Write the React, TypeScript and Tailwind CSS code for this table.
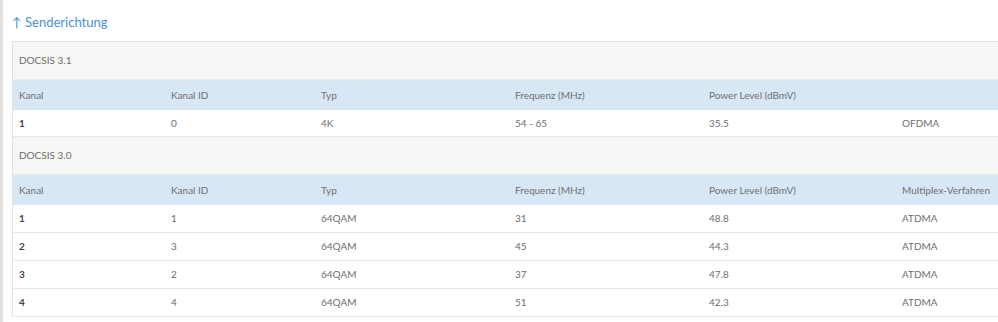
import React from "react";

const cols = "grid grid-cols-[152px_150px_194px_194px_193px_1fr]";

function Header({ last }: { last: string }) {
  const h = ["Kanal", "Kanal ID", "Typ", "Frequenz (MHz)", "Power Level (dBmV)", last];
  return (
    <div className={`${cols} h-[30px] items-center bg-[#d7e7f5] text-[#707070]`}>
      {h.map((t, i) => (
        <div key={i} className="pl-[6px]">{t}</div>
      ))}
    </div>
  );
}

function Row({ r, h = "h-[28px]" }: { r: string[]; h?: string }) {
  return (
    <div className={`${cols} ${h} items-center bg-white border-b border-[#e6e6e6] text-[#6e6e6e]`}>
      {r.map((t, i) => (
        <div key={i} className={`pl-[6px] ${i === 0 ? "font-bold text-[#444]" : ""}`}>{t}</div>
      ))}
    </div>
  );
}

function Section({ title }: { title: string }) {
  return (
    <div className="h-[38px] flex items-center pl-[6px] bg-[#f6f6f4] border-b border-[#ebebeb] text-[#6e6e6e]">{title}</div>
  );
}

export default function App() {
  const rows30 = [
    ["1", "1", "64QAM", "31", "48.8", "ATDMA"],
    ["2", "3", "64QAM", "45", "44.3", "ATDMA"],
    ["3", "2", "64QAM", "37", "47.8", "ATDMA"],
    ["4", "4", "64QAM", "51", "42.3", "ATDMA"],
  ];
  return (
    <div className="w-[998px] h-[322px] overflow-hidden bg-white flex" style={{ fontFamily: "Lato, 'Open Sans', sans-serif" }}>
      <div className="w-[3px] bg-[#e4e1dc] shrink-0" />
      <div className="pl-[9px] pt-[11px] flex flex-col">
        <div className="text-[13px] text-[#4a8fdc] h-[20px] leading-[22px]">↑ Senderichtung</div>
        <div className="mt-[10px] w-[1100px] border-t border-l border-[#e2e2e2] text-[10px]">
          <Section title="DOCSIS 3.1" />
          <Header last="" />
          <Row r={["1", "0", "4K", "54 - 65", "35.5", "OFDMA"]} h="h-[27px]" />
          <Section title="DOCSIS 3.0" />
          <Header last="Multiplex-Verfahren" />
          {rows30.map((r, i) => (
            <Row key={i} r={r} />
          ))}
        </div>
      </div>
    </div>
  );
}
